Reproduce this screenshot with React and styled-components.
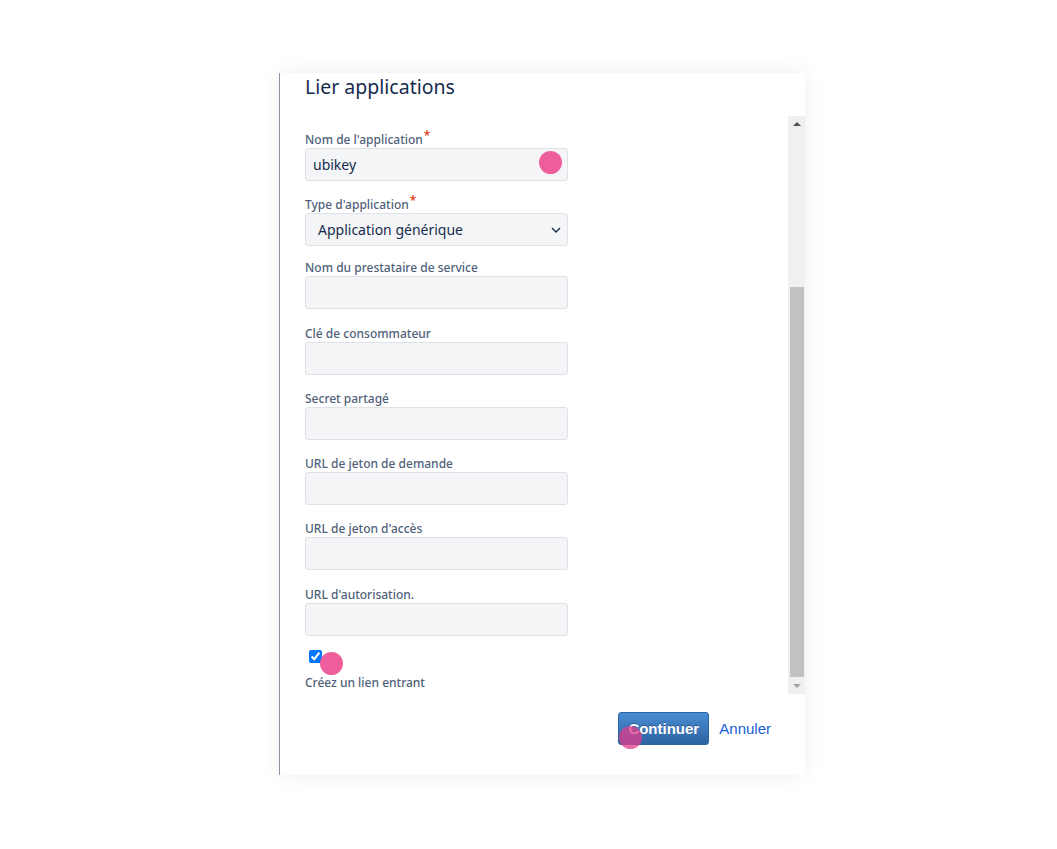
import styled, { createGlobalStyle } from "styled-components";

const GlobalStyle = createGlobalStyle`
  body {
    margin: 0;
    background: #ffffff;
    font-family: "Noto Sans", "Open Sans", sans-serif;
  }
`;

const fields = [
  { label: "Nom de l'application", required: true, value: "ubikey" },
  { label: "Type d'application", required: true, select: "Application générique" },
  { label: "Nom du prestataire de service" },
  { label: "Clé de consommateur" },
  { label: "Secret partagé" },
  { label: "URL de jeton de demande" },
  { label: "URL de jeton d'accès" },
  { label: "URL d'autorisation." },
];

export default function App() {
  return (
    <Page>
      <GlobalStyle />
      <Dialog>
        <Header>
          <Title>Lier applications</Title>
        </Header>
        <Body>
          <Form>
            {fields.map((f, i) => (
              <Field key={i} $tight={i === 1}>
                <Label>
                  {f.label}
                  {f.required && <Star>*</Star>}
                </Label>
                {f.select ? (
                  <Select>
                    <span>{f.select}</span>
                    <svg width="10" height="6" viewBox="0 0 10 6">
                      <path d="M1 1l4 4 4-4" fill="none" stroke="#172b4d" strokeWidth="1.4" />
                    </svg>
                  </Select>
                ) : (
                  <Input>
                    {f.value}
                    {i === 0 && <Dot $right="5px" $top="2px" />}
                  </Input>
                )}
              </Field>
            ))}
            <CheckBlock>
              <CheckWrap>
                <Check type="checkbox" checked readOnly />
                <Dot $left="15px" $top="2px" />
              </CheckWrap>
              <CheckLabel>Créez un lien entrant</CheckLabel>
            </CheckBlock>
          </Form>
          <Scrollbar>
            <Arrow $up />
            <Track>
              <Thumb />
            </Track>
            <Arrow />
          </Scrollbar>
        </Body>
        <Footer>
          <Button>
            Continuer
            <Dot $left="0px" $top="13px" $dim />
          </Button>
          <Cancel>Annuler</Cancel>
        </Footer>
      </Dialog>
    </Page>
  );
}

const Page = styled.div`
  min-height: 100vh;
  box-sizing: border-box;
  padding: 73px 0 0 279px;
`;

const Dialog = styled.div`
  width: 526px;
  height: 702px;
  box-sizing: border-box;
  background: #ffffff;
  border-left: 1px solid #8a92a0;
  border-radius: 0 0 5px 0;
  box-shadow: 0 0 22px rgba(0, 0, 0, 0.07);
  display: flex;
  flex-direction: column;
`;

const Header = styled.div`
  height: 43px;
  padding: 2px 25px 0;
  box-sizing: border-box;
`;

const Title = styled.h2`
  margin: 0;
  font-size: 19.5px;
  line-height: 24px;
  font-weight: 400;
  color: #172b4d;
`;

const Body = styled.div`
  height: 578px;
  display: flex;
  overflow: hidden;
`;

const Form = styled.div`
  flex: 1;
  padding: 16px 25px 0;
  display: flex;
  flex-direction: column;
`;

const Field = styled.div`
  margin-bottom: ${(p) => (p.$tight ? "14px" : "16.25px")};
`;

const Label = styled.div`
  font-size: 12px;
  line-height: 16px;
  font-weight: 500;
  color: #505f79;
`;

const Star = styled.span`
  color: #de350b;
  position: relative;
  top: -4px;
  margin-left: 1px;
`;

const Input = styled.div`
  position: relative;
  width: 263px;
  height: 33px;
  box-sizing: border-box;
  background: #f4f5f7;
  border: 1px solid #dfe1e6;
  border-radius: 3px;
  padding: 0 7px;
  font-size: 14px;
  line-height: 31px;
  color: #172b4d;
`;

const Select = styled(Input)`
  display: flex;
  align-items: center;
  justify-content: space-between;
  padding: 0 6px 0 12px;
`;

const Dot = styled.span`
  position: absolute;
  top: ${(p) => p.$top || "0px"};
  ${(p) => (p.$right ? `right: ${p.$right};` : `left: ${p.$left};`)}
  width: 23px;
  height: 23px;
  border-radius: 50%;
  background: ${(p) => (p.$dim ? "rgba(226, 60, 140, 0.75)" : "#ef5e9c")};
`;

const CheckBlock = styled.div`
  margin-top: -2px;
`;

const CheckWrap = styled.div`
  position: relative;
  height: 13px;
`;

const Check = styled.input`
  display: block;
  width: 13px;
  height: 13px;
  margin: 0 0 0 4px;
  accent-color: #0075ff;
`;

const CheckLabel = styled.div`
  margin-top: 12px;
  font-size: 12px;
  line-height: 16px;
  font-weight: 500;
  color: #505f79;
`;

const Scrollbar = styled.div`
  width: 17px;
  background: #f0f0f0;
  display: flex;
  flex-direction: column;
`;

const Arrow = styled.div`
  height: 17px;
  display: flex;
  align-items: center;
  justify-content: center;

  &::before {
    content: "";
    border-left: 4px solid transparent;
    border-right: 4px solid transparent;
    ${(p) =>
      p.$up
        ? "border-bottom: 4px solid #505050; margin-top: -1px;"
        : "border-top: 4px solid #a3a3a3;"}
  }
`;

const Track = styled.div`
  flex: 1;
  display: flex;
  flex-direction: column;
  justify-content: flex-end;
`;

const Thumb = styled.div`
  height: 390px;
  margin: 0 1px 0 2px;
  background: #c1c1c1;
`;

const Footer = styled.div`
  flex: 1;
  display: flex;
  justify-content: flex-end;
  align-items: flex-start;
  gap: 10px;
  padding: 18px 34px 0 0;
`;

const Button = styled.div`
  position: relative;
  width: 91px;
  height: 33px;
  box-sizing: border-box;
  border: 1px solid #2d64a4;
  border-radius: 3px;
  background: linear-gradient(#4a8cd2, #2c63a2);
  color: #ffffff;
  font-family: "Liberation Sans", Arial, sans-serif;
  font-size: 15px;
  font-weight: 700;
  line-height: 31px;
  text-align: center;
  text-shadow: 0 -1px 0 rgba(0, 0, 0, 0.3);
`;

const Cancel = styled.div`
  font-family: "Liberation Sans", Arial, sans-serif;
  font-size: 15px;
  line-height: 33px;
  color: #1a5fd6;
`;
